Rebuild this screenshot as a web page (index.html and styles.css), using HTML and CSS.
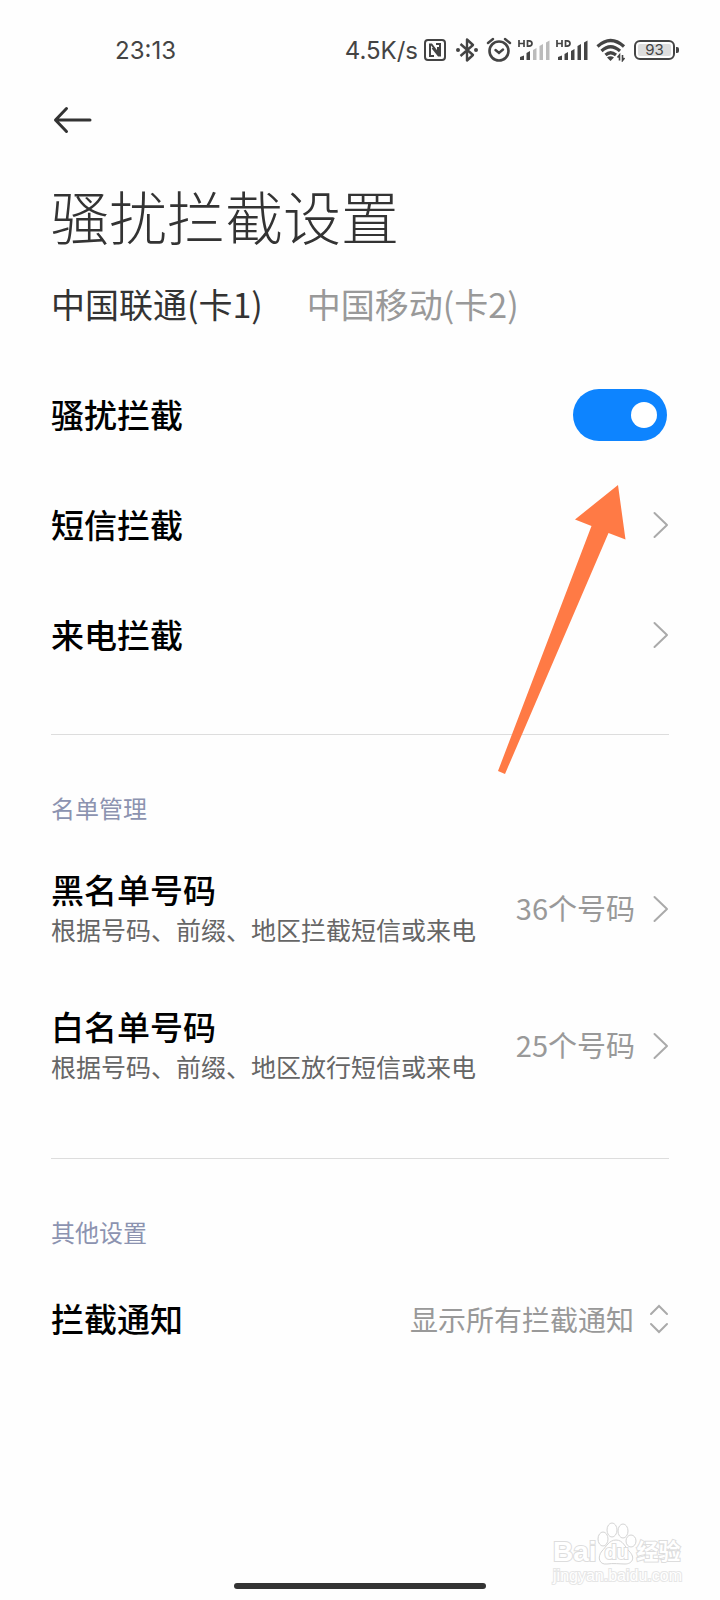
FILE: index.html
```html
<!DOCTYPE html>
<html lang="zh-CN">
<head>
  <meta charset="UTF-8" />
  <meta name="viewport" content="width=device-width, initial-scale=1" />
  <title>骚扰拦截设置</title>
  <link rel="stylesheet" href="styles.css">
</head>
<body>
  <div class="status-bar">
    <span class="status-time">23:13</span>
    <div class="status-icons">
      <span>4.5K/s</span>
      <!-- NFC -->
      <svg class="icon-nfc" width="22" height="22" viewBox="0 0 22 22" fill="none" stroke="#444" stroke-width="2">
        <rect x="1" y="1" width="20" height="20" rx="3" />
        <path d="M10 17H6V5.500h1.500L14 14V8M12 5h4v11.500h-1.500L8.500 9" />
      </svg>
      <!-- Bluetooth -->
      <svg class="icon-bt" width="22" height="26" viewBox="0 0 22 26" fill="none" stroke="#444" stroke-width="2.400">
        <path d="M4.500 7L17 18l-6 5.500v-21L17 8L4.500 19" stroke-linejoin="round" />
        <circle cx="2" cy="13" r="2" fill="#444" stroke="none" />
        <circle cx="20" cy="13" r="2" fill="#444" stroke="none" />
      </svg>
      <!-- Alarm -->
      <svg class="icon-alarm" width="26" height="26" viewBox="0 0 26 26" fill="none" stroke="#444" stroke-width="2.600" stroke-linecap="round">
        <circle cx="13" cy="14" r="9.500" />
        <path d="M9.500 13l3.500 3 4-3.500M2 6l5-4M24 6l-5-4" stroke-width="2.400" />
      </svg>
      <!-- SIM 1 signal -->
      <svg class="icon-signal" width="32" height="24" viewBox="0 0 32 24">
        <g fill="none" stroke="#444" stroke-width="1.700"><path d="M1 2v7M6 2v7M1 5.500h5M9.500 2.800v5.400h1.500q3-.2 3-2.700t-3-2.700z" /></g>
        <path fill="#444" d="M2 19l4-1.500V22H2zM8.500 15l3.500-2v9H8.500z" />
        <path fill="#bbb" d="M15 12l3.500-2v12H15zM21.500 8l3.500-2v16h-3.500zM28 4.500l3.500-2V22H28z" />
      </svg>
      <!-- SIM 2 signal -->
      <svg class="icon-signal" width="32" height="24" viewBox="0 0 32 24">
        <g fill="none" stroke="#444" stroke-width="1.700"><path d="M1 2v7M6 2v7M1 5.500h5M9.500 2.800v5.400h1.500q3-.2 3-2.700t-3-2.700z" /></g>
        <path fill="#444" d="M2 19l4-1.500V22H2zM8.500 16l3.500-2v8H8.500zM15 13l3.500-2v11H15zM21.500 8l3.500-2v16h-3.500zM28 4.500l3.500-2V22H28z" />
      </svg>
      <!-- Wi-Fi -->
      <svg class="icon-wifi" width="30" height="24" viewBox="0 0 30 24" fill="none" stroke="#444" stroke-width="3.200">
        <path d="M1.500 8.500Q14.500-3.500 28 8.500M5.500 13Q14.500 4.500 24 13M9.500 17q5-4.500 10.500 0" />
        <path d="M11 19.500q3.500-2.500 7 0L14.500 23z" fill="#444" stroke="none" />
        <path d="M23.500 22.500v-5.500l-2 2.500M26.500 17v5.500l2-2.500" stroke-width="1.600" />
      </svg>
      <span class="battery"><span class="battery-level">93</span></span>
    </div>
  </div>

  <header class="page-header">
    <button class="back-btn" type="button" aria-label="返回">
      <svg width="40" height="28" viewBox="0 0 40 28" fill="none" stroke="#333" stroke-width="3" stroke-linecap="round" stroke-linejoin="round">
        <path d="M37 14H2.500M13.500 2.500L2.500 14l11 11.500" />
      </svg>
    </button>
    <h1>骚扰拦截设置</h1>
    <div class="tabs" role="tablist">
      <button class="tab active" type="button" role="tab" aria-selected="true">中国联通(卡1)</button>
      <button class="tab" type="button" role="tab" aria-selected="false">中国移动(卡2)</button>
    </div>
  </header>

  <main>
    <section class="group">
      <div class="row">
        <label class="row-title" for="blockSwitch">骚扰拦截</label>
        <input class="switch" id="blockSwitch" type="checkbox" role="switch" checked />
      </div>
      <a class="row" href="#sms">
        <span class="row-title">短信拦截</span>
        <svg class="chevron" viewBox="0 0 16 28"><path d="M1.500 2L14 14L1.500 26" /></svg>
      </a>
      <a class="row" href="#call">
        <span class="row-title">来电拦截</span>
        <svg class="chevron" viewBox="0 0 16 28"><path d="M1.500 2L14 14L1.500 26" /></svg>
      </a>
      <svg class="pointer" width="128" height="290" viewBox="0 0 128 290">
        <path fill="#ff7a45" d="M120 0l7.500 54.500-17-6.500L7 289l-7-3L93.500 41 77 34.500z" />
      </svg>
    </section>

    <section class="group">
      <h2>名单管理</h2>
      <a class="row tall" href="#blacklist">
        <span class="row-text">
          <span class="row-title">黑名单号码</span>
          <span class="row-desc">根据号码、前缀、地区拦截短信或来电</span>
        </span>
        <span class="row-value">36个号码</span>
        <svg class="chevron" viewBox="0 0 16 28"><path d="M1.500 2L14 14L1.500 26" /></svg>
      </a>
      <a class="row tall" href="#whitelist">
        <span class="row-text">
          <span class="row-title">白名单号码</span>
          <span class="row-desc">根据号码、前缀、地区放行短信或来电</span>
        </span>
        <span class="row-value">25个号码</span>
        <svg class="chevron" viewBox="0 0 16 28"><path d="M1.500 2L14 14L1.500 26" /></svg>
      </a>
    </section>

    <section class="group">
      <h2>其他设置</h2>
      <div class="row">
        <label class="row-title" for="notifySelect">拦截通知</label>
        <select class="notify-select" id="notifySelect">
          <option>显示所有拦截通知</option>
        </select>
        <svg class="updown" viewBox="0 0 20 30"><path d="M2 10l8-8 8 8M2 20l8 8 8-8" /></svg>
      </div>
    </section>
  </main>

  <div class="watermark">
    <div class="watermark-logo">
      <span>Bai</span>
      <span class="paw">
        <svg class="paw-shape" width="40" height="44" viewBox="0 0 40 44" fill="#fff" stroke="#d4d4d4" stroke-width="1">
          <ellipse cx="6" cy="17" rx="5" ry="7" />
          <ellipse cx="15" cy="8" rx="5" ry="7" />
          <ellipse cx="26" cy="9" rx="5" ry="7" />
          <ellipse cx="34" cy="19" rx="5" ry="6" />
          <path d="M19 18c7 0 9 7 13 11 7 7 3 13-4 13-5 0-12-1-18 0C2 43 0 35 5 29c4-4 7-11 14-11z" />
        </svg>
        <span class="paw-text">du</span>
      </span>
      <span class="watermark-cn">经验</span>
    </div>
    <div class="watermark-url">jingyan.baidu.com</div>
  </div>

  <div class="home-bar"></div>
</body>
</html>
```
FILE: styles.css
```css
* {
  box-sizing: border-box;
}
body {
  margin: 0;
  min-height: 100vh;
  display: flex;
  flex-direction: column;
  position: relative;
  background: #fefefe;
  color: #000;
  font-family: "Noto Sans CJK SC", sans-serif;
}
button, select {
  font-family: inherit;
  background: none;
  border: none;
  padding: 0;
  cursor: pointer;
}
a {
  color: inherit;
  text-decoration: none;
}

/* Status bar */
.status-bar {
  display: flex;
  align-items: center;
  justify-content: space-between;
  height: 100px;
  padding: 0 41px 0 115px;
  font-family: Inter, sans-serif;
  font-size: 24px;
  color: #444;
}
.status-icons {
  display: flex;
  align-items: center;
}
.icon-nfc {
  margin-left: 6px;
}
.icon-bt {
  margin-left: 10px;
}
.icon-alarm {
  margin-left: 8px;
}
.icon-signal {
  margin-left: 6px;
}
.icon-wifi {
  margin-left: 8px;
}
.battery {
  position: relative;
  width: 41px;
  height: 20px;
  margin: 0 4px 0 8px;
  padding: 2px;
  border: 2px solid #444;
  border-radius: 6px;
}
.battery::after {
  content: "";
  position: absolute;
  top: 5px;
  right: -6px;
  width: 3px;
  height: 6px;
  border-radius: 0 2px 2px 0;
  background: #444;
}
.battery-level {
  display: block;
  border-radius: 2px;
  background: #ddd;
  font-size: 15px;
  line-height: 12px;
  text-align: center;
}

/* Header */
.page-header {
  padding: 0 51px;
}
.back-btn {
  display: flex;
  align-items: center;
  height: 40px;
  padding-left: 2px;
}
h1 {
  margin: 32px 0 0;
  font-size: 58px;
  line-height: 86px;
  font-weight: 300;
  color: #333;
}
.tabs {
  display: flex;
  gap: 44px;
  margin-top: 20px;
}
.tab {
  font-size: 34px;
  line-height: 52px;
  color: #999;
}
.tab.active {
  color: #333;
}

/* Setting rows */
main {
  padding: 30px 51px 0;
}
.group {
  position: relative;
  padding-bottom: 44px;
}
.group + .group {
  border-top: 1px solid #ddd;
}
h2 {
  margin: 0;
  padding: 43px 0 2px;
  font-size: 24px;
  line-height: 60px;
  font-weight: 400;
  color: #8c93b0;
}
.row {
  display: flex;
  align-items: center;
  min-height: 110px;
}
.row.tall {
  min-height: 137px;
}
.row-text {
  flex: 1;
  display: flex;
  flex-direction: column;
}
.row-title {
  flex: 1;
  font-size: 33px;
  line-height: 40px;
  font-weight: 500;
}
.row > .row-title,
.row-value {
  padding-bottom: 3px;
}
.row-desc {
  font-size: 25px;
  line-height: 40px;
  color: #666;
  white-space: nowrap;
}
.row-value {
  font-size: 29px;
  color: #999;
  white-space: nowrap;
}
.chevron {
  width: 16px;
  height: 28px;
  margin-left: 18px;
  fill: none;
  stroke: #aaa;
  stroke-width: 2;
  stroke-linecap: round;
  stroke-linejoin: round;
}
.updown {
  width: 20px;
  height: 30px;
  margin-left: 14px;
  fill: none;
  stroke: #aaa;
  stroke-width: 2;
  stroke-linecap: round;
}
.switch {
  appearance: none;
  width: 94px;
  height: 52px;
  margin: 0 2px 0 0;
  padding: 13px 10px;
  border-radius: 26px;
  background: #ccc;
  cursor: pointer;
}
.switch::before {
  content: "";
  display: block;
  width: 26px;
  height: 26px;
  border-radius: 50%;
  background: #fff;
}
.switch:checked {
  background: #0d84ff;
}
.switch:checked::before {
  margin-left: auto;
}
.notify-select {
  appearance: none;
  font-size: 28px;
  line-height: 40px;
  color: #999;
}
.pointer {
  position: absolute;
  top: 125px;
  right: 43px;
  z-index: 1;
  pointer-events: none;
}

/* Watermark */
.watermark {
  position: absolute;
  right: 38px;
  bottom: 14px;
  color: #fff;
  font-family: "Liberation Sans", "Noto Sans CJK SC", sans-serif;
  -webkit-text-stroke: 2px #ddd;
  paint-order: stroke fill;
}
.watermark-logo {
  display: flex;
  align-items: flex-end;
  font-size: 28px;
  line-height: 28px;
  font-weight: 700;
}
.paw {
  position: relative;
  height: 44px;
}
.paw-shape {
  paint-order: normal;
}
.paw-text {
  position: absolute;
  left: 0;
  right: 0;
  bottom: 0;
  font-size: 20px;
  text-align: center;
}
.watermark-cn {
  font-size: 22px;
}
.watermark-url {
  font-size: 16px;
  line-height: 20px;
  -webkit-text-stroke-color: #e6e6e6;
}

.home-bar {
  width: 35%;
  height: 6px;
  margin: auto auto 11px;
  border-radius: 3px;
  background: #333;
}
```
